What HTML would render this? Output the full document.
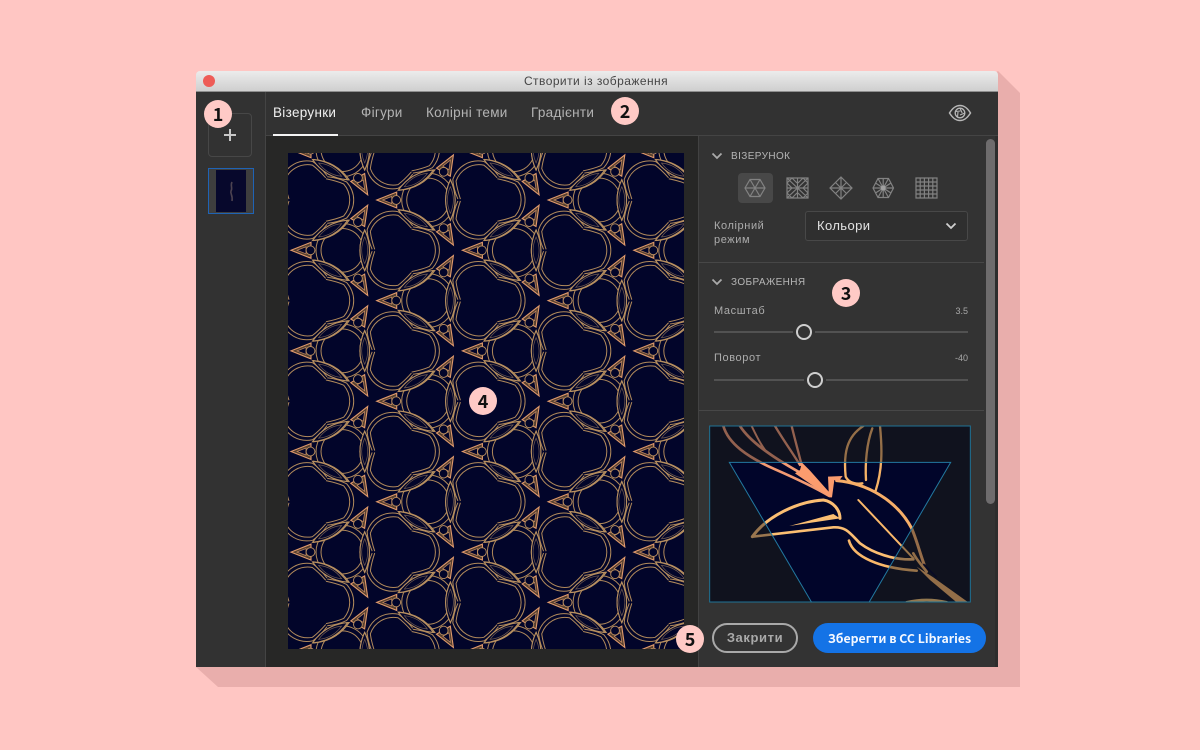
<!DOCTYPE html>
<html lang="uk"><head><meta charset="utf-8"><title>Створити із зображення</title>
<style>
*{box-sizing:border-box}
html,body{margin:0;padding:0;width:1200px;height:750px;overflow:hidden;background:#ffc6c3;font-family:"Liberation Sans","Noto Sans CJK SC",sans-serif}
.a{position:absolute}
.t{position:absolute;white-space:nowrap;line-height:1}
.badge{position:absolute;width:28px;height:28px;border-radius:50%;background:#ffcac6;color:#111;font:600 18px/28px "Noto Sans CJK SC","Liberation Sans",sans-serif;text-align:center}
.sec{font-size:10px;letter-spacing:.4px;color:#b6b6b6}
.lab{font-size:11px;letter-spacing:.6px;color:#acacac}
.val{font-size:9px;color:#a8a8a8}
.tab{font-size:13.5px;letter-spacing:.3px;color:#b4b4b4}
.sep{position:absolute;height:1px;background:#474747}
</style></head><body>

<svg class="a" style="left:0;top:0" width="1200" height="750"><polygon points="998,71 1020,93 1020,687 218,687 196,667" fill="#e9aeac"/></svg>

<div class="a" style="left:196px;top:71px;width:802px;height:21px;background:linear-gradient(#ececec,#cfcfcf);border-radius:4px 4px 0 0;border-bottom:1px solid #8e8e8e"></div>
<div class="a" style="left:203px;top:75px;width:12px;height:12px;border-radius:50%;background:#ee5c57"></div>
<div class="t" style="left:196px;width:800px;top:75px;text-align:center;font-size:12px;letter-spacing:.45px;color:#454545">Створити із зображення</div>

<div class="a" style="left:196px;top:92px;width:802px;height:575px;background:#323232"></div>
<div class="a" style="left:265px;top:92px;width:1px;height:575px;background:#444"></div>
<div class="a" style="left:266px;top:135px;width:732px;height:1px;background:#444"></div>
<div class="a" style="left:266px;top:136px;width:432px;height:531px;background:#272726"></div>
<div class="a" style="left:698px;top:136px;width:1px;height:531px;background:#424242"></div>
<div class="a" style="left:699px;top:136px;width:299px;height:531px;background:#333"></div>

<!-- rail -->
<div class="a" style="left:208px;top:113px;width:44px;height:44px;border:1px solid #474747;border-radius:4px"></div>
<div class="a" style="left:224px;top:134px;width:12px;height:2px;background:#c8c8c8"></div>
<div class="a" style="left:229px;top:129px;width:2px;height:12px;background:#c8c8c8"></div>
<div class="a" style="left:208px;top:168px;width:46px;height:46px;border:1.5px solid #1f63b5;background:#3e3e3e"></div>
<div class="a" style="left:216px;top:170px;width:30px;height:42px;background:#07082c"></div>
<svg class="a" style="left:226px;top:180px" width="12" height="26"><path d="M6 2C4 6 7 8 5 11C4 14 7 15 6 21" fill="none" stroke="#4d4350" stroke-width="1.600"/></svg>

<!-- tabs -->
<div class="t tab" style="left:273px;top:106px;color:#f0f0f0">Візерунки</div>
<div class="t tab" style="left:361px;top:106px">Фігури</div>
<div class="t tab" style="left:426px;top:106px">Колірні теми</div>
<div class="t tab" style="left:531px;top:106px">Градієнти</div>
<div class="a" style="left:273px;top:134px;width:65px;height:2px;background:#f4f4f4"></div>
<svg class="a" style="left:948px;top:104px" width="24" height="18" viewBox="0 0 24 18" fill="none" stroke="#b8b8b8">
<path d="M1.500 9C5 3.500 8 1.500 12 1.500S19 3.500 22.500 9C19 14.500 16 16.500 12 16.500S5 14.500 1.500 9Z" stroke-width="1.500"/>
<circle cx="12" cy="9" r="4.800" stroke-width="1.300"/>
<path d="M12 4.200L14.200 9M16.800 9L12 11M9.500 13L10 8M7.500 7.500L12.500 7" stroke-width="1.100"/></svg>

<!-- pattern -->
<svg class="a" style="left:288px;top:153px;filter:blur(.3px)" width="396" height="496" viewBox="288 153 396 496">
<defs>
<g id="arm">
 <g fill="none" stroke="#b18a5b" stroke-width="1">
  <path d="M-44.750 -21.200Q-34 -19 -27 -16Q-21 -9 -21 0Q-21 9 -27 16Q-34 19 -44.750 21.200"/>
  <path d="M-43.500 -23.400Q-32 -22 -24 -18Q-17 -10 -17 0Q-17 10 -24 18Q-32 22 -43.500 23.400"/>
  <path d="M40.900 -13.500Q36 -7 36 0Q36 7 40.900 13.500"/>
  <path d="M37 -16.700Q31 -9 31 0Q31 9 37 16.700"/>
 </g>
 <g transform="rotate(30)">
  <path d="M30 -6Q50.300 -15.500 70.600 -6Q50.300 3.500 30 -6Z" fill="#02052a" stroke="#b89060" stroke-width="1.100"/>
  <path d="M37 -6Q50.300 -12 63.600 -6Q50.300 0 37 -6Z" fill="#02052a" stroke="#6f5a50" stroke-width=".7"/>
 </g>
 <g transform="scale(1,-1) rotate(30)">
  <path d="M30 -6Q50.300 -15.500 70.600 -6Q50.300 3.500 30 -6Z" fill="#02052a" stroke="#b89060" stroke-width="1.100"/>
  <path d="M37 -6Q50.300 -12 63.600 -6Q50.300 0 37 -6Z" fill="#02052a" stroke="#6f5a50" stroke-width=".7"/>
 </g>
 <path d="M6 0L26 -8L26 8Z" fill="#57402f" stroke="#e09a6c" stroke-width="1.100"/>
 <path d="M12 0L21 -3.500L21 3.500Z" fill="#02052a" stroke="#c48a62" stroke-width=".7"/>
 <circle cx="25.500" cy="0" r="4.400" fill="#02052a" stroke="#bb8f5f" stroke-width=".9"/>
</g>
<g id="star"><use href="#arm"/><use href="#arm" transform="rotate(120)"/><use href="#arm" transform="rotate(240)"/></g>
<g id="colA"><use href="#star" y="99.400"/><use href="#star" y="200"/><use href="#star" y="300.600"/><use href="#star" y="401.200"/><use href="#star" y="501.800"/><use href="#star" y="602.400"/><use href="#star" y="703"/></g>
<g id="colB"><use href="#star" y="49"/><use href="#star" y="149.700"/><use href="#star" y="250.300"/><use href="#star" y="350.900"/><use href="#star" y="451.500"/><use href="#star" y="552.100"/><use href="#star" y="652.700"/></g>
</defs>
<rect x="288" y="153" width="396" height="496" fill="#02052a"/>
<use href="#colA" x="199.300"/><use href="#colB" x="285"/><use href="#colA" x="370.700"/><use href="#colB" x="456.400"/><use href="#colA" x="542.100"/><use href="#colB" x="627.800"/><use href="#colA" x="713.500"/>
</svg>

<!-- panel -->
<div class="a" style="left:986px;top:139px;width:9px;height:365px;border-radius:5px;background:#6e6c6d"></div>
<div class="a" style="left:995px;top:136px;width:3px;height:531px;background:#2d2d2d"></div>
<div class="sep" style="left:699px;top:262px;width:285px"></div>
<div class="sep" style="left:699px;top:410px;width:285px"></div>

<svg class="a" style="left:711px;top:152px" width="12" height="8"><path d="M1.500 1.500L6 6L10.500 1.500" fill="none" stroke="#aaa" stroke-width="1.800"/></svg>
<div class="t sec" style="left:731px;top:152px">ВІЗЕРУНОК</div>

<div class="a" style="left:738px;top:173px;width:35px;height:30px;border-radius:4px;background:#484848"></div>
<svg class="a" style="left:735px;top:170px" width="240" height="36" viewBox="735 170 240 36" fill="none" stroke="#828282" stroke-width="1.200">
 <path d="M745 188L750 179.500H760L765 188L760 196.500H750ZM745 188H765M750 179.500L760 196.500M760 179.500L750 196.500"/>
 <path d="M787 178H808V198H787ZM787 178L808 198M808 178L787 198M797.500 178V198M787 188H808M792 178L787 183M803 178L808 183M792 198L787 193M803 198L808 193M797 183L792 178M798 183L803 178M797 193L792 198M798 193L803 198M792 188L787 183M803 188L808 183M792 188L787 193M803 188L808 193"/>
 <path d="M841 177L852 188L841 199L830 188ZM830 188H852M841 177V199M835.500 182.500L846.500 193.500M846.500 182.500L835.500 193.500"/>
 <path d="M873 188L878 178.500H888.500L893.500 188L888.500 197.500H878ZM873 188H893.500M878 178.500L888.500 197.500M888.500 178.500L878 197.500M883.200 178.500V197.500M875.500 183L891 193M891 183L875.500 193"/>
 <circle cx="883.200" cy="188" r="2.500" fill="#a0a0a0" stroke="none"/>
 <path d="M916 178H937V198H916ZM916 182H937M916 186H937M916 190H937M916 194H937M920.200 178V198M924.400 178V198M928.600 178V198M932.800 178V198"/>
</svg>

<div class="t lab" style="left:714px;top:221px">Колірний</div>
<div class="t lab" style="left:714px;top:235px">режим</div>
<div class="a" style="left:805px;top:211px;width:163px;height:30px;border:1px solid #484848;border-radius:3px;background:#2f2f2f"></div>
<div class="t" style="left:817px;top:219px;font-size:13px;letter-spacing:.4px;color:#e2e2e2">Кольори</div>
<svg class="a" style="left:945px;top:222px" width="12" height="8"><path d="M1.500 1.500L6 6L10.500 1.500" fill="none" stroke="#d0d0d0" stroke-width="1.800"/></svg>

<svg class="a" style="left:711px;top:278px" width="12" height="8"><path d="M1.500 1.500L6 6L10.500 1.500" fill="none" stroke="#aaa" stroke-width="1.800"/></svg>
<div class="t sec" style="left:731px;top:278px">ЗОБРАЖЕННЯ</div>

<div class="t lab" style="left:714px;top:306px">Масштаб</div>
<div class="t val" style="right:232px;top:307px">3.5</div>
<div class="a" style="left:714px;top:331px;width:254px;height:2px;background:#525252"></div>
<div class="a" style="left:793px;top:321px;width:22px;height:22px;background:#333"></div>
<div class="a" style="left:796px;top:324px;width:16px;height:16px;border:2px solid #cfcfcf;border-radius:50%"></div>

<div class="t lab" style="left:714px;top:353px">Поворот</div>
<div class="t val" style="right:232px;top:354px">-40</div>
<div class="a" style="left:714px;top:379px;width:254px;height:2px;background:#525252"></div>
<div class="a" style="left:804px;top:369px;width:22px;height:22px;background:#333"></div>
<div class="a" style="left:807px;top:372px;width:16px;height:16px;border:2px solid #cfcfcf;border-radius:50%"></div>

<!-- preview -->
<svg class="a" style="left:700px;top:420px" width="330" height="190" viewBox="0 0 990 570">
<defs><clipPath id="pv"><rect x="28" y="17" width="784" height="530"/></clipPath></defs>
<g clip-path="url(#pv)">
<rect x="28" y="17" width="784" height="530" fill="#11121e"/>
<path d="M88 127H752L507 547H335Z" fill="#01052a"/>
<g fill="none" stroke-linecap="round">
 <path d="M70 18C85 70 140 110 225 148C280 172 340 200 388 228" stroke="#f29a72" stroke-width="8"/>
 <path d="M120 18C150 65 215 110 295 155" stroke="#f29a72" stroke-width="8"/>
 <path d="M155 18C170 50 180 70 195 90" stroke="#f29a72" stroke-width="6"/>
 <path d="M225 18C250 60 275 95 300 135M275 18C285 60 295 95 305 135" stroke="#f29a72" stroke-width="7"/>
 <path d="M490 18C440 50 430 100 437 170Q450 195 487 190" stroke="#f5b266" stroke-width="7"/>
 <path d="M517 25C500 70 495 130 498 180" stroke="#f5b266" stroke-width="7"/>
 <path d="M540 18C547 90 547 150 527 212" stroke="#f5b266" stroke-width="7"/>
 <path d="M410 182C500 190 590 240 635 325C650 360 660 400 672 432" stroke="#f6ae68" stroke-width="9"/>
 <path d="M157 350C200 290 290 245 370 240C400 245 420 270 420 295" stroke="#fbbe72" stroke-width="9"/>
 <path d="M157 350L400 322C440 320 450 340 480 370C520 400 580 420 640 418" stroke="#fbbe72" stroke-width="8"/>
 <path d="M447 362C460 410 540 445 650 452" stroke="#f9b86a" stroke-width="8"/>
 <path d="M475 240L640 415" stroke="#f9b86a" stroke-width="6"/>
 <path d="M640 400C650 420 665 435 680 455" stroke="#f1b066" stroke-width="8"/>
 <path d="M620 547Q680 533 740 547" stroke="#f1c272" stroke-width="8"/>
</g>
<path d="M390 232L285 160L300 150L306 128L330 152L386 215L384 170L428 168L415 185L403 180L396 232Z" fill="#fb9c6e"/>
<path d="M420 295L268 318L400 282Z" fill="#fbbe72"/>
<path d="M650 440L700 472L805 547H770L690 480Z" fill="#f1b066"/>
<path d="M670 432L710 472" stroke="#02052a" stroke-width="5"/>
<path fill-rule="evenodd" d="M28 17H812V547H28ZM88 127H752L507 547H335Z" fill="#11121e" fill-opacity=".42"/>
</g>
<rect x="29" y="18" width="782" height="528" fill="none" stroke="#1f7396" stroke-width="3"/>
<path d="M335 547L88 127H752L507 547" fill="none" stroke="#2279a0" stroke-width="3"/>
</svg>
<div class="a" style="left:699px;top:603px;width:287px;height:64px;background:#333"></div>

<!-- buttons -->
<div class="a" style="left:712px;top:623px;width:86px;height:30px;border:2px solid #a9a9a9;border-radius:15px;color:#a9a9a9;text-align:center;font:700 13px/26px 'Liberation Sans',sans-serif;letter-spacing:.6px">Закрити</div>
<div class="a" style="left:813px;top:623px;width:173px;height:30px;border-radius:15px;background:#1473e6;color:#f4f8ff;text-align:center;font:700 12.3px/30px 'Noto Sans CJK SC','Liberation Sans',sans-serif">Зберегти в CC Libraries</div>

<div class="badge" style="left:204px;top:100px">1</div>
<div class="badge" style="left:611px;top:97px">2</div>
<div class="badge" style="left:832px;top:279px">3</div>
<div class="badge" style="left:469px;top:387px">4</div>
<div class="badge" style="left:676px;top:625px">5</div>
</body></html>
